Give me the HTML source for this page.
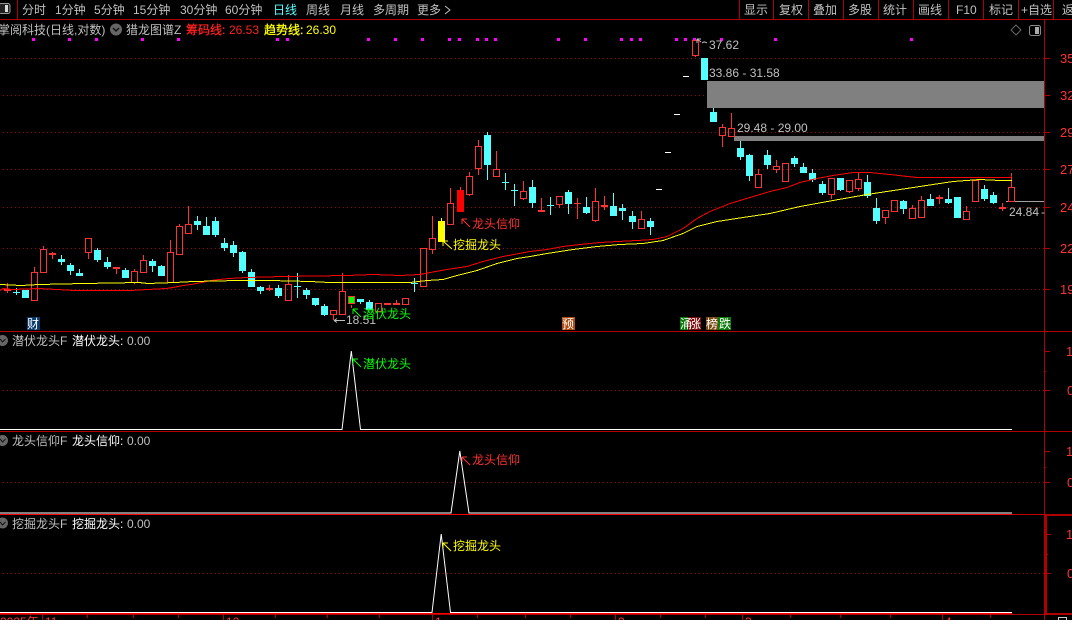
<!DOCTYPE html>
<html><head><meta charset="utf-8"><style>
html,body{margin:0;padding:0;background:#000;width:1072px;height:620px;overflow:hidden}
svg{display:block;position:absolute;left:0;top:0}
text{font-family:"Liberation Sans","WenQuanYi Zen Hei","Noto Sans CJK SC",sans-serif;font-size:12px;fill:#c0c0c0}
.c{shape-rendering:crispEdges}
.g{stroke:#a00000;stroke-dasharray:1 3;fill:none}
</style></head><body>
<svg width="1072" height="620" viewBox="0 0 1072 620">
<!-- frame -->
<g class="c" fill="none" stroke="#b00000">
<path d="M0 19.5H1072M17.5 0V19M739.5 0V19M773.5 0V19M808.5 0V19M843.5 0V19M878.5 0V19M913.5 0V19M948.5 0V19M983.5 0V19M1018.5 0V19M1053.5 0V19"/>
<path d="M1044.5 20V620M0 331.5H1072M0 431.5H1072M0 614.5H1072"/>
<path d="M1044 58.5h6M1044 95.5h6M1044 132.5h6M1044 169.5h6M1044 207.5h6M1044 248.5h6M1044 289.5h6M1044 351.5h6M1044 371.5h2M1044 390.5h6M1044 451.5h6M1044 467.5h2M1044 482.5h6M1046 534.5h5M1046 554.5h2M1046 573.5h5"/>
<path d="M42.5 615V620M87.5 615V618M133.5 615V618M178.5 615V618M223.5 615V620M275.5 615V618M327.5 615V618M379.5 615V618M432.5 615V620M477.5 615V618M525.5 615V618M570.5 615V618M615.5 615V620M660.5 615V618M705.5 615V618M742.5 615V620M790.5 615V618M840.5 615V618M890.5 615V618M942.5 615V620M990.5 615V618"/>
</g>
<rect class="c" x="0" y="514" width="1072" height="1" fill="#c00000"/>
<rect class="c" x="1044" y="514" width="28" height="2" fill="#b00000"/>
<rect class="c" x="1045" y="514" width="2" height="100" fill="#b00000"/>
<rect class="c" x="1044" y="613" width="28" height="2" fill="#b00000"/>
<!-- grid -->
<g class="c">
<path class="g" d="M3 58.5H1044M3 95.5H1044M3 132.5H1044M3 169.5H1044M3 207.5H1044M3 248.5H1044M3 289.5H1044"/>
<path class="g" d="M3 390.5H1044M3 482.5H1044M3 573.5H1044"/>
</g>
<!-- grey zones -->
<g class="c" fill="#808080">
<rect x="707" y="81" width="337" height="27"/>
<rect x="734" y="136" width="310" height="5"/>
<rect x="1006" y="201" width="38" height="1" fill="#a0a0a0"/>
</g>
<!-- magenta markers -->
<path class="c" fill="#ff00ff" d="M32 38h3v3h-3zM68 38h3v3h-3zM95 38h3v3h-3zM141 38h3v3h-3zM177 38h3v3h-3zM276 38h3v3h-3zM286 38h3v3h-3zM367 38h3v3h-3zM394 38h3v3h-3zM421 38h3v3h-3zM448 38h3v3h-3zM458 38h3v3h-3zM476 38h3v3h-3zM485 38h3v3h-3zM494 38h3v3h-3zM557 38h3v3h-3zM584 38h3v3h-3zM620 38h3v3h-3zM630 38h3v3h-3zM639 38h3v3h-3zM675 38h3v3h-3zM684 38h3v3h-3zM693 38h3v3h-3zM720 38h3v3h-3zM774 38h3v3h-3zM910 38h3v3h-3z"/>
<!-- cyan candles -->
<path class="c" fill="none" stroke="#54ffff" d="M61.5 255V265M70.5 263V275M79.5 269V273M97.5 248V262M107.5 257V269M125.5 268V270M152.5 259V272M161.5 265V266M197.5 216V230M206.5 217V226M215.5 217V237M224.5 238V251M233.5 241V257M242.5 251V273M251.5 269V272M260.5 286V294M278.5 285V298M306.5 288V299M315.5 305V306M324.5 304V316M360.5 302V304M369.5 300V302M487.5 132V180M532.5 180V208M568.5 190V214M586.5 197V214M613.5 193V206M622.5 204V220M632.5 211V229M650.5 218V235M713.5 108V112M740.5 141V160M749.5 154V181M767.5 150V169M794.5 156V167M803.5 163V167M812.5 169V182M822.5 181V195M840.5 190V191M867.5 175V198M876.5 198V224M903.5 200V214M930.5 194V199M948.5 188V204M984.5 185V201M993.5 192V204M16.5 288V295M13 292.5h7M297.5 273V298M294 286.5h7M414.5 278V292M411 283.5h7M505.5 173V190M502 182.5h7M514.5 184V206M511 190.5h7M550.5 197V215M547 205.5h7"/>
<path class="c" fill="#54ffff" d="M22 290h7v8h-7zM58 259h7v3h-7zM67 265h7v6h-7zM76 273h7v3h-7zM94 250h7v10h-7zM104 262h7v5h-7zM122 270h7v8h-7zM149 261h7v5h-7zM158 266h7v10h-7zM194 221h7v4h-7zM203 226h7v9h-7zM212 221h7v14h-7zM221 243h7v5h-7zM230 245h7v8h-7zM239 252h7v19h-7zM248 272h7v15h-7zM257 287h7v4h-7zM275 288h7v8h-7zM303 290h7v5h-7zM312 298h7v7h-7zM321 306h7v9h-7zM357 299h7v3h-7zM366 302h7v8h-7zM484 135h7v30h-7zM529 187h7v16h-7zM565 192h7v12h-7zM583 207h7v6h-7zM610 206h7v10h-7zM619 208h7v3h-7zM629 216h7v6h-7zM647 221h7v6h-7zM701 58h7v22h-7zM710 112h7v10h-7zM737 148h7v9h-7zM746 155h7v21h-7zM764 155h7v10h-7zM791 158h7v6h-7zM800 167h7v6h-7zM809 173h7v7h-7zM819 184h7v9h-7zM837 178h7v12h-7zM864 182h7v14h-7zM873 208h7v13h-7zM900 201h7v8h-7zM927 199h7v7h-7zM945 199h7v4h-7zM954 197h7v21h-7zM981 189h7v10h-7zM990 195h7v8h-7z"/>
<!-- red candles -->
<path class="c" fill="none" stroke="#ff3232" d="M31.5 272.5h6v28h-6zM34.5 267V272M40.5 249.5h6v23h-6zM43.5 246V249M85.5 238.5h6v14h-6zM88.5 253V259M131.5 271.5h6v11h-6zM134.5 269V271M134.5 283V284M140.5 260.5h6v12h-6zM143.5 255V260M167.5 252.5h6v30h-6zM170.5 240V252M176.5 226.5h6v28h-6zM179.5 224V226M185.5 224.5h6v9h-6zM188.5 206V224M285.5 284.5h6v16h-6zM288.5 275V284M330.5 310.5h6v4h-6zM333.5 315V320M339.5 291.5h6v23h-6zM342.5 273V291M375.5 303.5h6v8h-6zM402.5 298.5h6v6h-6zM420.5 248.5h6v38h-6zM429.5 238.5h6v11h-6zM432.5 216V238M432.5 250V254M447.5 203.5h6v21h-6zM450.5 188V203M466.5 176.5h6v18h-6zM469.5 172V176M469.5 195V196M475.5 146.5h6v22h-6zM478.5 140V146M478.5 169V175M493.5 169.5h6v7h-6zM496.5 151V169M520.5 191.5h6v7h-6zM523.5 181V191M523.5 199V200M556.5 196.5h6v8h-6zM559.5 205V208M592.5 201.5h6v19h-6zM595.5 188V201M595.5 221V222M638.5 219.5h6v9h-6zM641.5 211V219M692.5 40.5h6v15h-6zM695.5 56V57M719.5 127.5h6v8h-6zM722.5 124V127M722.5 136V147M728.5 128.5h6v8h-6zM731.5 113V128M755.5 174.5h6v13h-6zM758.5 169V174M773.5 166.5h6v3h-6zM776.5 160V166M776.5 170V173M782.5 163.5h6v18h-6zM828.5 178.5h6v16h-6zM831.5 195V199M846.5 180.5h6v11h-6zM849.5 192V193M855.5 179.5h6v9h-6zM858.5 172V179M858.5 189V191M882.5 210.5h6v7h-6zM885.5 218V224M891.5 200.5h6v11h-6zM909.5 208.5h6v10h-6zM912.5 205V208M918.5 200.5h6v17h-6zM921.5 196V200M963.5 211.5h6v8h-6zM966.5 206V211M972.5 180.5h6v21h-6zM1008.5 187.5h6v14h-6zM1011.5 173V187M7.5 283V293M4 289.5h7M4 290.5h7M52.5 252V259M49 253.5h7M49 254.5h7M116.5 269V274M113 267.5h7M113 268.5h7M269.5 285V291M266 288.5h7M266 289.5h7M384 303.5h7M384 304.5h7M396.5 300V303M393 303.5h7M393 304.5h7M541.5 198V210M538 210.5h7M538 211.5h7M577.5 198V219M574 203.5h7M604.5 196V210M601 205.5h7M601 206.5h7M939.5 195V204M936 197.5h7M936 198.5h7M1002.5 203V211M999 207.5h7M999 208.5h7M351.5 305V308"/>
<g class="c">
<rect x="348" y="296" width="7" height="8" fill="#ff3232"/><rect x="349" y="297" width="5" height="6" fill="#00ff00"/>
<rect x="438" y="221" width="7" height="21" fill="#ffff00"/><rect x="441" y="218" width="1" height="3" fill="#ffff00"/>
<rect x="457" y="190" width="7" height="22" fill="#ff0000"/><rect x="460" y="187" width="1" height="3" fill="#ff3232"/>
<path fill="#fff" d="M656 189h6v1h-6zM665 152h6v1h-6zM674 114h6v1h-6zM683 76h6v1h-6z"/>
</g>
<!-- MA lines -->
<polyline class="c" fill="none" stroke="#ff0000" points="0,290.5 3,288.5 12,289.5 39,288.5 57,289.5 75,290.5 130,290.5 148,289.5 166,288.5 173,287.5 183,285.5 191,284.5 202,282.5 211,280.5 220,279.5 229,278.5 247,277.5 283,276.5 347,275.5 373,274.5 400,275.5 420,274.5 430,272.5 447,269.5 467,266.5 483,261.5 503,256.5 530,251.5 547,249.5 563,246.5 580,244.5 600,242.5 618,241.5 637,240.5 653,239.5 667,236.5 683,228.5 697,218.5 710,211.5 730,203.5 750,197.5 770,191.5 787,187.5 800,182.5 817,178.5 833,175.5 853,172.5 870,172.5 890,174.5 917,177.5 1010,177.5 1012,176.5"/>
<polyline class="c" fill="none" stroke="#ffff00" points="0,284.5 21,285.5 39,284.5 84,283.5 139,282.5 148,283.5 175,282.5 193,281.5 238,280.5 270,280.5 310,281.5 329,282.5 410,282.5 427,280.5 443,279.5 457,275.5 477,270.5 497,263.5 517,258.5 530,256.5 547,253.5 573,249.5 597,246.5 620,244.5 643,243.5 663,240.5 683,233.5 697,226.5 717,221.5 743,217.5 770,213.5 800,206.5 833,200.5 867,194.5 900,189.5 933,184.5 953,181.5 980,179.5 1000,180.5 1012,180.5"/>
<!-- panels -->
<g fill="none" stroke="#fff">
<path d="M0 429.5H342L351.3 351L360.5 429.5H1012"/>
<path d="M0 513H451L459.8 451L469 513H1012"/>
<path d="M0 612.5H432L441.2 534L450.5 612.5H1012"/>
</g>
<g class="c"><rect x="0" y="514" width="1012" height="1" fill="#ff0000"/><rect x="0" y="613" width="1012" height="1" fill="#ff0000"/></g>
<!-- arrows -->
<g fill="none" stroke-width="1">
<path stroke="#ff3232" d="M470 227L462 219M462 219v5M462 219h5"/>
<path stroke="#ffff00" d="M452 249L443 241M443 241v5M443 241h5"/>
<path stroke="#00ff00" d="M361 317L353 309M353 309v5M353 309h5"/>
<path stroke="#00ff00" d="M361 367L353 359M353 359v5M353 359h5"/>
<path stroke="#ff3232" d="M470 465L462 457M462 457v5M462 457h5"/>
<path stroke="#ffff00" d="M451 551L443 543M443 543v5M443 543h5"/>
<path stroke="#c0c0c0" d="M334 320.5h11M334 320.5l3-2M334 320.5l3 2"/>
<path stroke="#c0c0c0" d="M697 39l4 3M697 39v4M697 39h4M702 43q2-2 5 0"/>
</g>
<!-- toolbar -->
<rect x="-1" y="3.5" width="11" height="10" rx="2" fill="#222" stroke="#999"/><rect x="5" y="5" width="3" height="7" fill="#ddd"/>
<text x="22" y="14">分时</text><text x="55" y="14">1分钟</text><text x="94" y="14">5分钟</text><text x="133" y="14">15分钟</text><text x="180" y="14">30分钟</text><text x="225" y="14">60分钟</text>
<text x="273" y="14" style="fill:#54ffff">日线</text><text x="306" y="14">周线</text><text x="340" y="14">月线</text><text x="373" y="14">多周期</text><text x="417" y="14">更多</text>
<path d="M445 6l5 4-5 4" fill="none" stroke="#c0c0c0"/>
<text x="744" y="14">显示</text><text x="779" y="14">复权</text><text x="813" y="14">叠加</text><text x="848" y="14">多股</text><text x="883" y="14">统计</text><text x="918" y="14">画线</text><text x="956" y="14">F10</text><text x="989" y="14">标记</text><text x="1021" y="14">+自选</text><text x="1062" y="14">返</text>
<!-- info row -->
<text x="-2" y="34">掌阅科技(日线,对数)</text>
<circle cx="116" cy="29.5" r="6" fill="#666"/><path d="M113 28l3 3 3-3" fill="none" stroke="#111" stroke-width="1.5"/>
<text x="126" y="34">猎龙图谱Z</text>
<text x="186" y="34" style="fill:#ff2020;stroke:#ff2020;stroke-width:.3">筹码线:</text><text x="229" y="34" style="fill:#ff2020">26.53</text>
<text x="264" y="34" style="fill:#ffff00;stroke:#ffff00;stroke-width:.3">趋势线:</text><text x="306" y="34" style="fill:#ffff00">26.30</text>
<path d="M1016 25l5 5-5 5-5-5z" fill="none" stroke="#666"/>
<rect x="1029.5" y="25.5" width="11" height="10" rx="2" fill="none" stroke="#888"/><rect x="1035" y="27" width="4" height="7" fill="#aaa"/>
<!-- price labels -->
<text x="709" y="49">37.62</text><text x="709" y="77">33.86 - 31.58</text><text x="737" y="132">29.48 - 29.00</text><text x="1009" y="216">24.84</text><text x="1041" y="216">-</text><text x="346" y="324">18.51</text>
<text x="472" y="228" style="fill:#ff3232">龙头信仰</text>
<text x="453" y="249" style="fill:#ffff00">挖掘龙头</text>
<text x="363" y="318" style="fill:#00ff00">潜伏龙头</text>
<text x="363" y="368" style="fill:#00ff00">潜伏龙头</text>
<text x="472" y="464" style="fill:#ff3232">龙头信仰</text>
<text x="453" y="550" style="fill:#ffff00">挖掘龙头</text>
<!-- event tags -->
<g class="c"><rect x="27" y="317" width="13" height="13" fill="#0a3a6a"/><rect x="562" y="317" width="13" height="13" fill="#b04a10"/><rect x="680" y="317" width="9" height="13" fill="#0a7a0a"/><rect x="688" y="317" width="13" height="13" fill="#7a0a0a"/><rect x="706" y="317" width="12" height="13" fill="#7a4a10"/><rect x="718" y="317" width="13" height="13" fill="#0a7a0a"/></g>
<text x="27" y="328" style="fill:#fff">财</text><text x="562" y="328" style="fill:#fff">预</text><text x="680" y="328" style="fill:#fff">涌</text><text x="689" y="328" style="fill:#fff">涨</text><text x="706" y="328" style="fill:#fff">榜</text><text x="719" y="328" style="fill:#fff">跌</text>
<!-- panel titles -->
<circle cx="2.5" cy="340.5" r="5.5" fill="#666"/><path d="M0 339l2.5 3 3-3" fill="none" stroke="#111"/>
<text x="12" y="345">潜伏龙头F</text><text x="72" y="345" style="fill:#fff">潜伏龙头:</text><text x="127" y="345">0.00</text>
<circle cx="2.5" cy="440.5" r="5.5" fill="#666"/><path d="M0 439l2.5 3 3-3" fill="none" stroke="#111"/>
<text x="12" y="445">龙头信仰F</text><text x="72" y="445" style="fill:#fff">龙头信仰:</text><text x="127" y="445">0.00</text>
<circle cx="2.5" cy="523" r="5.5" fill="#666"/><path d="M0 522l2.5 3 3-3" fill="none" stroke="#111"/>
<text x="12" y="528">挖掘龙头F</text><text x="72" y="528" style="fill:#fff">挖掘龙头:</text><text x="127" y="528">0.00</text>
<!-- axis labels -->
<text x="1060" y="63" style="fill:#ff3232;font-size:13px">35</text><text x="1060" y="100" style="fill:#ff3232;font-size:13px">32</text><text x="1060" y="137" style="fill:#ff3232;font-size:13px">29</text><text x="1060" y="174" style="fill:#ff3232;font-size:13px">27</text><text x="1060" y="212" style="fill:#ff3232;font-size:13px">24</text><text x="1060" y="253" style="fill:#ff3232;font-size:13px">22</text><text x="1060" y="294" style="fill:#ff3232;font-size:13px">19</text>
<text x="1066" y="356" style="fill:#ff3232;font-size:13px">1</text><text x="1067" y="395" style="fill:#ff3232;font-size:13px">0</text><text x="1066" y="456" style="fill:#ff3232;font-size:13px">1</text><text x="1067" y="487" style="fill:#ff3232;font-size:13px">0</text><text x="1066" y="539" style="fill:#ff3232;font-size:13px">1</text><text x="1067" y="578" style="fill:#ff3232;font-size:13px">0</text>
<!-- date axis -->
<text x="0" y="626" style="fill:#ff3232">2025年</text><text x="45" y="626" style="fill:#ff3232">11</text><text x="226" y="626" style="fill:#ff3232">12</text><text x="435" y="626" style="fill:#ff3232">1</text><text x="618" y="626" style="fill:#ff3232">2</text><text x="745" y="626" style="fill:#ff3232">3</text><text x="945" y="626" style="fill:#ff3232">4</text>
<rect class="c" x="1058.5" y="617.5" width="8" height="6" fill="none" stroke="#ccc"/>
</svg>
</body></html>
